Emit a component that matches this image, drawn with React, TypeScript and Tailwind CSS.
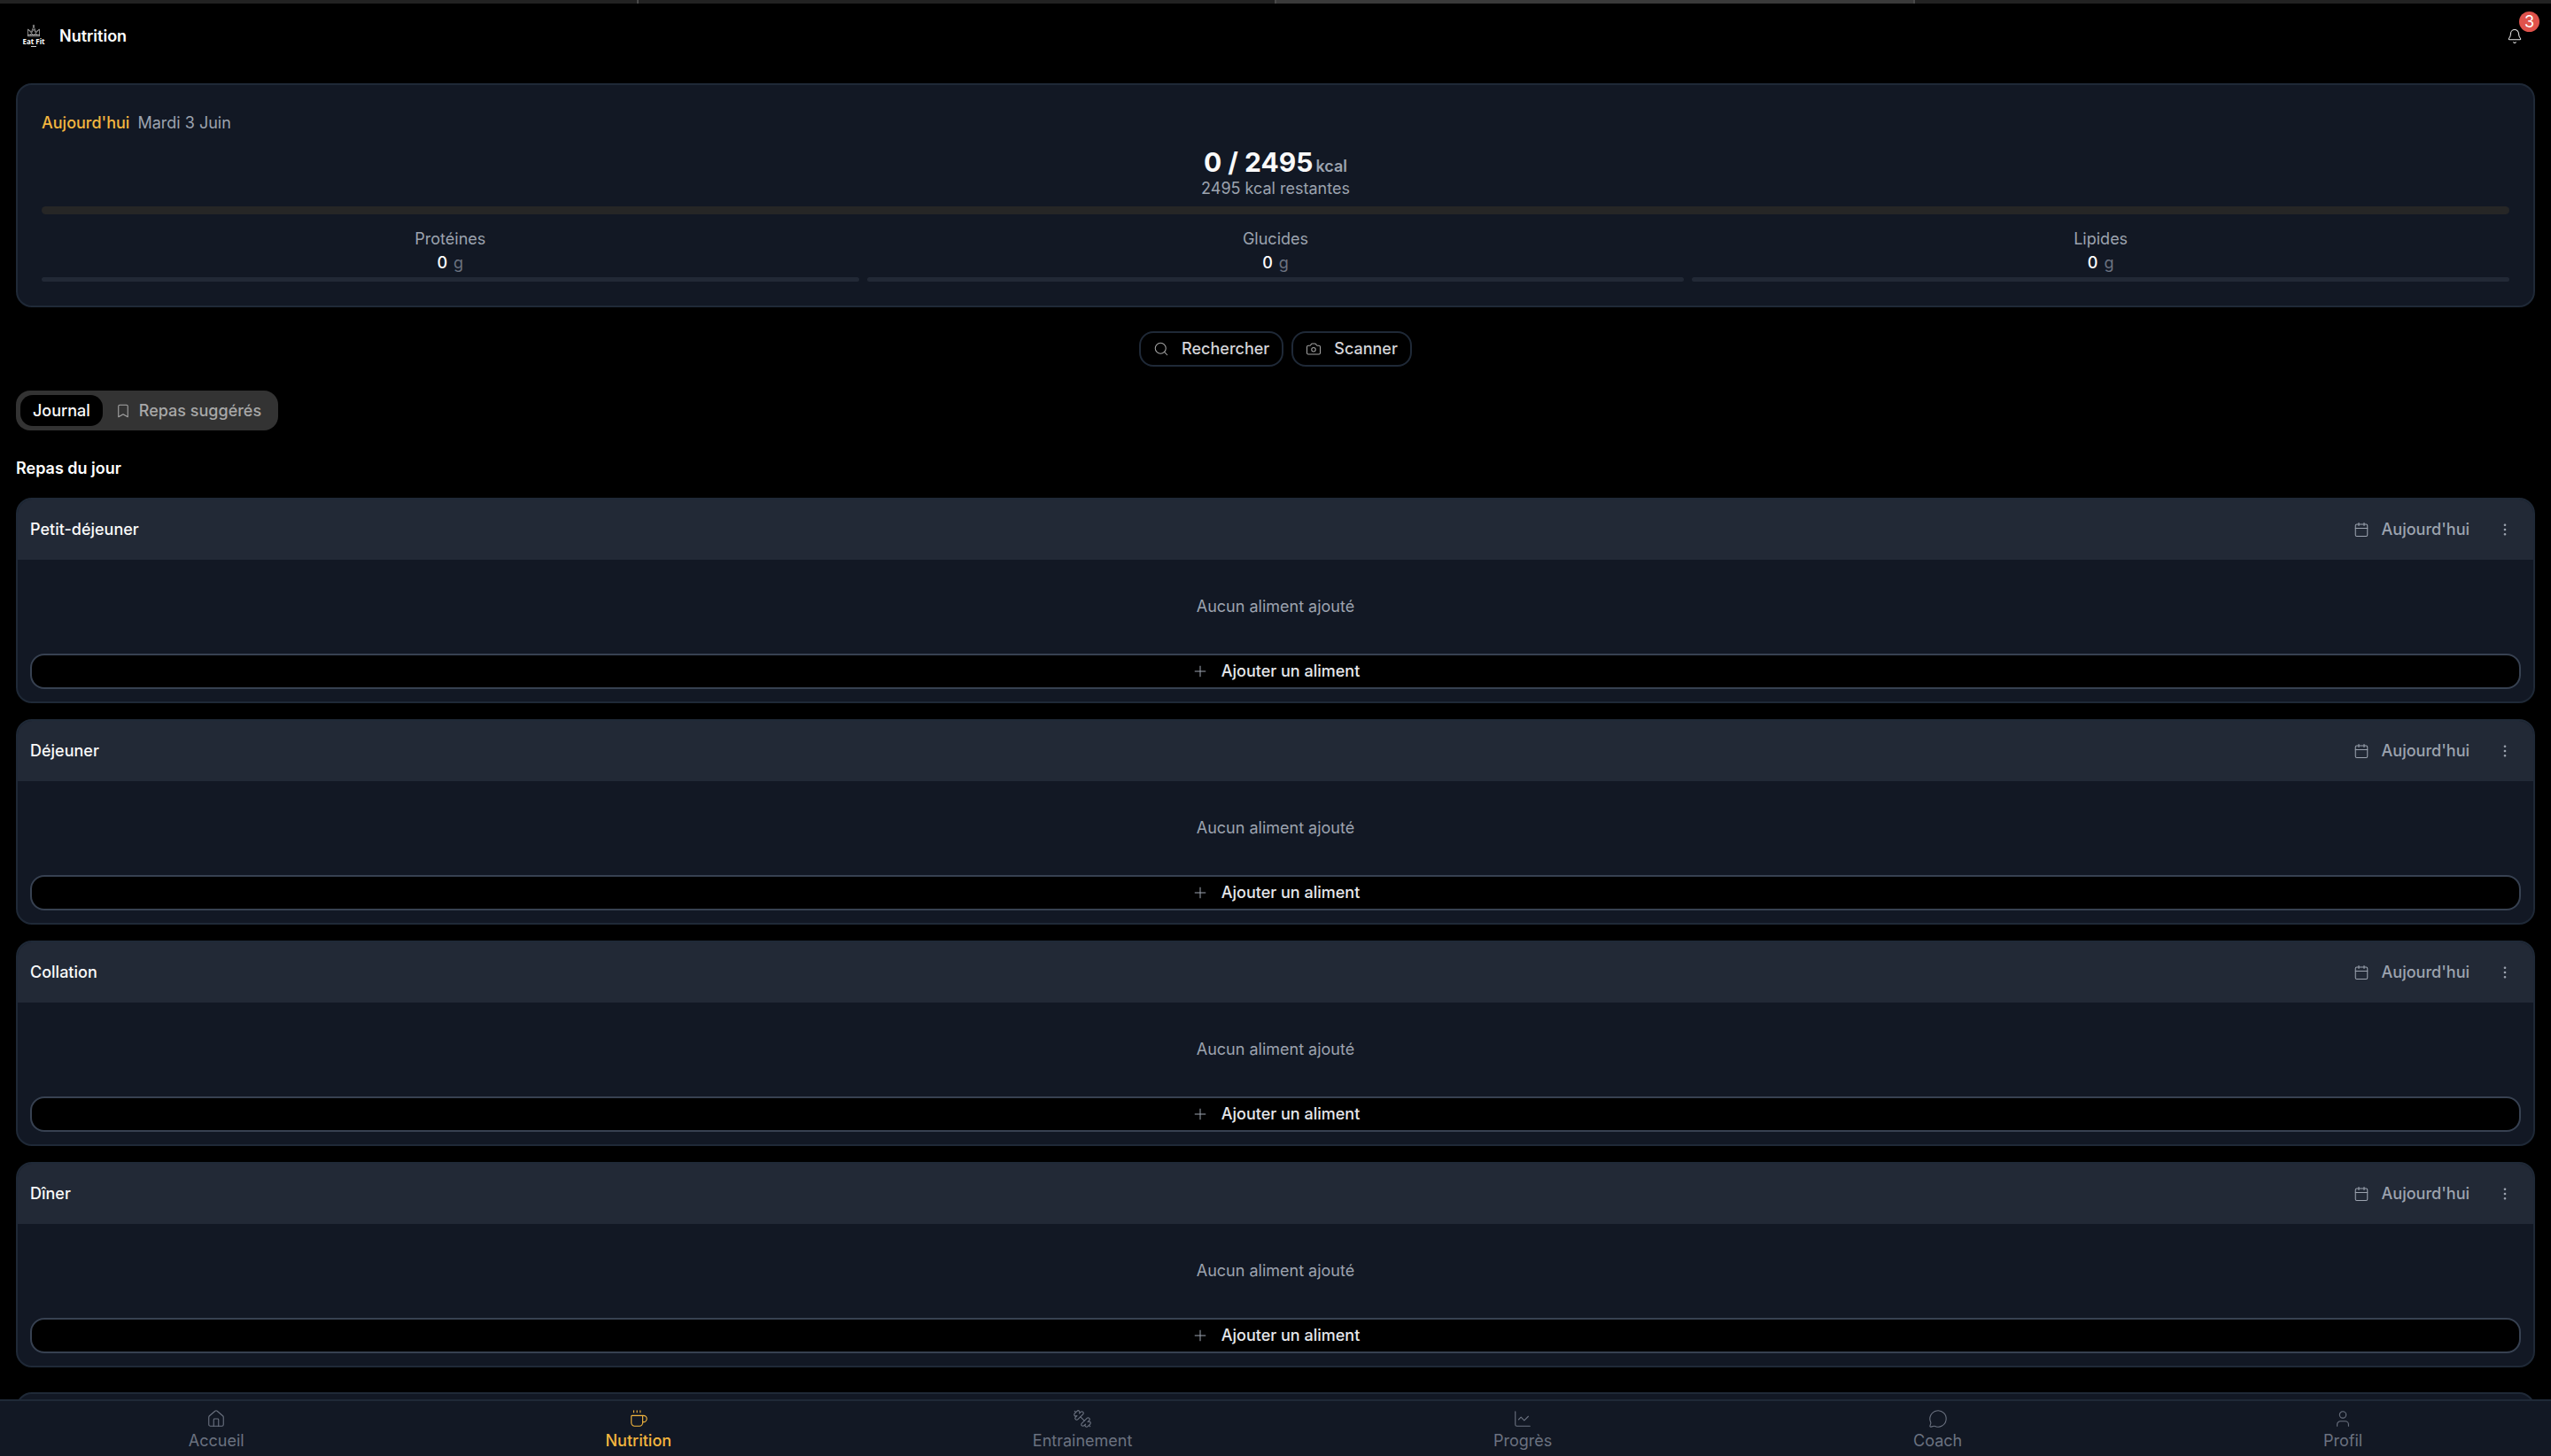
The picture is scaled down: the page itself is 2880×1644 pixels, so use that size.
import React from "react";
import {
  Bell,
  Bookmark,
  Calendar,
  Camera,
  Coffee,
  EllipsisVertical,
  House,
  MessageCircle,
  Plus,
  Search,
  User,
  type LucideIcon,
} from "lucide-react";

const macros = ["Protéines", "Glucides", "Lipides"];
const meals = ["Petit-déjeuner", "Déjeuner", "Collation", "Dîner"];

function Logo() {
  return (
    <svg viewBox="0 0 40 40" className="size-10" role="img" aria-label="Eat Fit">
      <g fill="none" stroke="#a3a3a3" strokeWidth="0.8">
        <path d="M13.5 20V12l4 3L20 8.500l2.500 6.500 4-3v8z" />
        <path d="M13.500 12l6.500 7 6.500-7M16 19l4-7 4 7" />
        <path d="M13.500 18.500h13" stroke="#e5e5e5" />
        <circle cx="20" cy="8" r="0.800" />
      </g>
      <text x="20" y="29" textAnchor="middle" fill="#fff" fontFamily="Open Sans, sans-serif" fontWeight="700" fontSize="8">
        Eat Fit
      </text>
      <path d="M17 31.500h6" stroke="#d4d4d4" strokeWidth="1" />
    </svg>
  );
}

function ProgressIcon({ className }: { className?: string }) {
  return (
    <svg viewBox="0 0 24 24" fill="none" stroke="currentColor" strokeWidth="1.2" strokeLinecap="round" strokeLinejoin="round" className={className}>
      <path d="M3 3v16a2 2 0 0 0 2 2h16" />
      <path d="m19 9-5 5-4-4-3 3" />
    </svg>
  );
}

function DumbbellIcon({ className }: { className?: string }) {
  return (
    <svg viewBox="0 0 24 24" fill="none" stroke="currentColor" strokeWidth="1.2" strokeLinecap="round" strokeLinejoin="round" className={className}>
      <path d="M14.4 14.4 9.6 9.6" />
      <path d="M18.657 21.485a2 2 0 1 1-2.829-2.828l-1.767 1.768a2 2 0 1 1-2.829-2.829l6.364-6.364a2 2 0 1 1 2.829 2.829l-1.768 1.767a2 2 0 1 1 2.828 2.829z" />
      <path d="m21.5 21.5-1.4-1.4" />
      <path d="M3.9 3.9 2.5 2.5" />
      <path d="M6.404 12.768a2 2 0 1 1-2.829-2.829l1.768-1.767a2 2 0 1 1-2.828-2.829l2.828-2.828a2 2 0 1 1 2.829 2.828l1.767-1.768a2 2 0 1 1 2.829 2.829z" />
    </svg>
  );
}

function MealCard({ name }: { name: string }) {
  return (
    <section className="overflow-hidden rounded-[18px] border-2 border-[#1f2937] bg-[#121824]">
      <header className="flex h-[68px] items-center justify-between bg-[#222936] px-[14px]">
        <h3 className="font-medium text-[#fafafa]">{name}</h3>
        <div className="flex items-center gap-[22px] text-[#9ca3af]">
          <button className="flex items-center gap-[14px] font-medium">
            <Calendar size={18} strokeWidth={1.4} />
            Aujourd'hui
          </button>
          <button aria-label={`Options ${name}`} className="flex size-[36px] items-center justify-center">
            <EllipsisVertical size={18} strokeWidth={1.6} />
          </button>
        </div>
      </header>
      <div className="px-[14px] pb-[14px]">
        <p className="py-[40px] text-center leading-[26px] text-[#9ca3af]">Aucun aliment ajouté</p>
        <button className="flex h-10 w-full items-center justify-center gap-[14px] rounded-[16px] border-2 border-[#374151] bg-black font-medium text-[#e5e7eb]">
          <Plus size={20} strokeWidth={1.2} className="text-[#9ca3af]" />
          Ajouter un aliment
        </button>
      </div>
    </section>
  );
}

const navItems: { label: string; Icon: LucideIcon | typeof ProgressIcon; active?: boolean }[] = [
  { label: "Accueil", Icon: House },
  { label: "Nutrition", Icon: Coffee, active: true },
  { label: "Entrainement", Icon: DumbbellIcon },
  { label: "Progrès", Icon: ProgressIcon },
  { label: "Coach", Icon: MessageCircle },
  { label: "Profil", Icon: User },
];

export default function App() {
  return (
    <div className="h-screen overflow-hidden bg-black font-['Inter',sans-serif] text-[18px] leading-[26px] text-white">
      <div className="grid h-1 grid-cols-4 gap-[2px] bg-[#4a4a4a]">
        <div className="bg-[#222222]" />
        <div className="bg-[#222222]" />
        <div className="bg-[#3a3a3a]" />
        <div className="bg-[#222222]" />
      </div>
      <header className="flex h-[74px] items-center justify-between pr-[28px] pl-[18px]">
        <div className="flex items-center gap-[9px]">
          <Logo />
          <h1 className="font-semibold">Nutrition</h1>
        </div>
        <button aria-label="Notifications" className="relative flex size-[26px] items-center justify-center">
          <Bell size={18} strokeWidth={1.4} className="text-[#e5e5e5]" />
          <span className="absolute -top-[15px] -right-[15px] flex size-[23px] items-center justify-center rounded-full bg-[#e0524b] text-[18px]">3</span>
        </button>
      </header>

      <main className="px-[18px] pt-4">
        <section className="rounded-[18px] border-2 border-[#1f2937] bg-[#121824] px-[27px] pt-[30px] pb-[27px]">
          <div className="flex gap-[9px]">
            <h2 className="font-medium text-[#f3b63f]">Aujourd'hui</h2>
            <span className="text-[#9ca3af]">Mardi 3 Juin</span>
          </div>
          <div className="mt-[14px] text-center">
            <p className="text-[30px] leading-[34px] font-bold text-[#fafafa]">
              0 / 2495 <span className="-ml-1 text-[18px] leading-none font-semibold text-[#9ca3af]">kcal</span>
            </p>
            <p className="text-[#9ca3af]">2495 kcal restantes</p>
          </div>
          <div className="mt-[7px] h-[9px] rounded-full bg-[#262626]" />
          <div className="mt-[14px] grid grid-cols-3 gap-[9px]">
            {macros.map((m) => (
              <div key={m} className="text-center">
                <p className="leading-[27px] text-[#9ca3af]">{m}</p>
                <p className="flex justify-center gap-[7px] leading-[27px]">
                  <span className="font-medium text-white">0</span>
                  <span className="text-[#6b7280]">g</span>
                </p>
                <div className="mt-[3px] h-[5px] rounded-full bg-[#222936]" />
              </div>
            ))}
          </div>
        </section>

        <div className="mt-[27px] flex justify-center gap-[9px] font-medium text-[#d4d4d8]">
          <button className="flex h-10 items-center gap-[14px] rounded-[16px] border-2 border-[#1f2937] px-[14px]">
            <Search size={18} strokeWidth={1.4} className="text-[#a3a3a3]" />
            Rechercher
          </button>
          <button className="flex h-10 items-center gap-[14px] rounded-[16px] border-2 border-[#1f2937] px-[14px]">
            <Camera size={18} strokeWidth={1.4} className="text-[#a3a3a3]" />
            Scanner
          </button>
        </div>

        <div role="tablist" className="mt-[27px] flex h-[45px] w-fit items-center rounded-[16px] bg-[#333333] px-[5px] font-medium">
          <button role="tab" aria-selected="true" className="h-[35px] rounded-[14px] bg-black px-[14px] text-[#fafafa]">
            Journal
          </button>
          <button role="tab" aria-selected="false" className="flex h-[35px] items-center gap-[9px] px-[14px] text-[#a8a8a8]">
            <Bookmark size={18} strokeWidth={1.4} />
            Repas suggérés
          </button>
        </div>

        <h2 className="mt-[30px] mb-[20px] font-semibold">Repas du jour</h2>
        <div className="flex flex-col gap-[18px]">
          {meals.map((m) => (
            <MealCard key={m} name={m} />
          ))}
        </div>
        <div className="mt-[28px] h-20 rounded-[18px] border-2 border-[#1f2937] bg-[#121824]" />
      </main>

      <nav className="fixed inset-x-0 bottom-0 flex h-16 justify-around border-t-2 border-[#1f2937] bg-[#121824] px-[9px] pt-[9px]">
        {navItems.map(({ label, Icon, active }) => (
          <a key={label} href="#" className={active ? "flex flex-col items-center font-medium text-[#f3b63f]" : "flex flex-col items-center text-[#6b7280]"}>
            <Icon className="size-[22px]" strokeWidth={1.2} />
            <span className="leading-[28px]">{label}</span>
          </a>
        ))}
      </nav>
    </div>
  );
}
